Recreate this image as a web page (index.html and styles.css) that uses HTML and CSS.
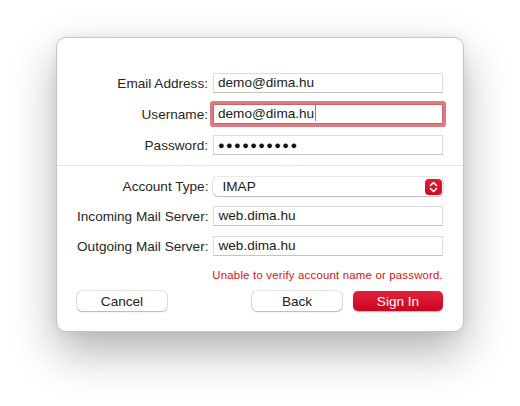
FILE: index.html
```html
<!DOCTYPE html>
<html lang="en">
  <head>
    <meta charset="UTF-8" />
    <title>Add Account</title>
    <link rel="stylesheet" href="styles.css">
  </head>
  <body>
    <div class="dialog">
      <div class="form-grid top">
        <label class="label">Email Address:</label>
        <div class="field">demo@dima.hu</div>

        <label class="label">Username:</label>
        <div class="field focused">demo@dima.hu<span class="caret"></span></div>

        <label class="label">Password:</label>
        <div class="field dots">&#9679;&#9679;&#9679;&#9679;&#9679;&#9679;&#9679;&#9679;&#9679;&#9679;</div>
      </div>

      <div class="separator"></div>

      <div class="form-grid bottom">
        <label class="label">Account Type:</label>
        <div class="popup">
          <span>IMAP</span>
          <span class="stepper">
            <svg width="9" height="12" viewBox="0 0 9 12">
              <path d="M1.5 4.5 L4.5 1.5 L7.5 4.5 M1.5 7.5 L4.5 10.5 L7.5 7.5" fill="none" stroke="white" stroke-width="1.6" stroke-linecap="round" stroke-linejoin="round"/>
            </svg>
          </span>
        </div>

        <label class="label">Incoming Mail Server:</label>
        <div class="field">web.dima.hu</div>

        <label class="label">Outgoing Mail Server:</label>
        <div class="field">web.dima.hu</div>
      </div>

      <p class="error">Unable to verify account name or password.</p>

      <div class="buttons">
        <button class="btn">Cancel</button>
        <span class="spacer"></span>
        <button class="btn">Back</button>
        <button class="btn primary">Sign In</button>
      </div>
    </div>
  </body>
</html>
```

FILE: styles.css
```css
html,
body {
  margin: 0;
  background: #ffffff;
  font-family: "Liberation Sans", Arial, sans-serif;
  font-size: 13.6px;
  color: #222;
}

body {
  min-height: 100vh;
  box-sizing: border-box;
  padding: 37px 0 0 56px;
}

.dialog {
  width: 408px;
  height: 295px;
  box-sizing: border-box;
  background: #fff;
  border: 1px solid #c4c4c4;
  border-radius: 10px;
  box-shadow: 0 20px 45px rgba(0, 0, 0, 0.3), 0 0 12px rgba(0, 0, 0, 0.06);
  padding-top: 35px;
}

.form-grid {
  display: grid;
  grid-template-columns: 1fr 230px;
  column-gap: 5px;
  padding: 0 20px;
  align-items: center;
}

.form-grid.top {
  row-gap: 11px;
}

.form-grid.bottom {
  row-gap: 10px;
  padding-top: 11px;
}

.label {
  text-align: right;
  color: #262626;
  white-space: nowrap;
}

.field {
  height: 20px;
  box-sizing: border-box;
  border: 1px solid #dcdcdc;
  border-bottom-color: #c4c4c4;
  background: #fff;
  padding: 0 4px;
  line-height: 18px;
  color: #1a1a1a;
  white-space: nowrap;
}

.field.focused {
  box-shadow: 0 0 0 3px #df7980;
  border-color: #c8656c;
  border-radius: 1px;
}

.caret {
  display: inline-block;
  width: 1px;
  height: 16px;
  background: #e0666f;
  vertical-align: -3px;
  margin-left: 1px;
}

.field.dots {
  font-size: 11px;
  letter-spacing: 1.4px;
  color: #111;
}

.separator {
  height: 1px;
  background: #e2e2e2;
  margin-top: 10px;
}

.popup {
  height: 19px;
  display: flex;
  align-items: center;
  justify-content: space-between;
  background: #fff;
  border-radius: 5px;
  box-shadow: 0 0 0 0.5px rgba(0, 0, 0, 0.18), 0 1px 1.5px rgba(0, 0, 0, 0.2);
  padding: 0 1px 0 9px;
  color: #1a1a1a;
}

.stepper {
  width: 17px;
  height: 16px;
  border-radius: 4px;
  background: linear-gradient(#e11d34, #cf0a22);
  display: flex;
  align-items: center;
  justify-content: center;
}

.error {
  margin: 13px 20px 0 0;
  text-align: right;
  font-size: 11.4px;
  color: #de0f0f;
  letter-spacing: 0.2px;
}

.buttons {
  display: flex;
  gap: 11px;
  padding: 0 20px;
  margin-top: 10px;
}

.spacer {
  flex: 1;
}

.btn {
  width: 90px;
  height: 20px;
  padding: 0;
  font-family: inherit;
  font-size: 13.6px;
  color: #222;
  background: #fff;
  border: none;
  border-radius: 5px;
  box-shadow: 0 0 0 0.5px rgba(0, 0, 0, 0.22), 0 1px 1.5px rgba(0, 0, 0, 0.2);
}

.btn.primary {
  color: #fff;
  background: linear-gradient(#e3233a, #cc0420);
  box-shadow: 0 0.5px 1px rgba(0, 0, 0, 0.25);
}
```
